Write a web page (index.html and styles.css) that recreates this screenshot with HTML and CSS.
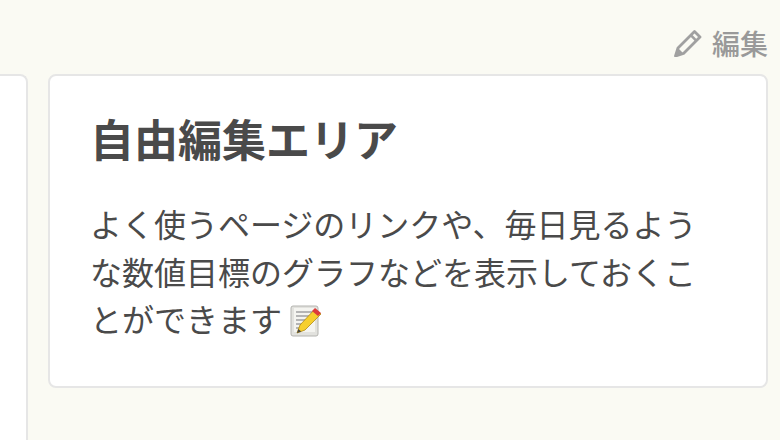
FILE: index.html
```html
<!DOCTYPE html>
<html lang="ja">
<head>
    <meta charset="UTF-8">
    <title>自由編集エリア</title>
    <link rel="stylesheet" href="styles.css">
</head>
<body>
    <div class="toolbar">
        <a class="edit-link" href="#">
            <svg class="edit-icon" viewBox="0 0 28 28" aria-hidden="true">
                <path d="M20.5 2.5 26 8 9.5 24.5 1.5 27l2.5-8z" fill="none" stroke="#a0a0a0" stroke-width="2.8" stroke-linejoin="round"/>
                <path d="M16.8 6.2l5.4 5.4" stroke="#a0a0a0" stroke-width="2.6"/>
                <path d="M1.5 27l2.5-8 5.5 5.5z" fill="#a0a0a0"/>
            </svg>
            編集
        </a>
    </div>
    <div class="columns">
        <div class="panel-left"></div>
        <div class="card">
            <h2>自由編集エリア</h2>
            <p>
                よく使うページのリンクや、毎日見るような数値目標のグラフなどを表示しておくことができます
                <svg class="memo" viewBox="0 0 32 32" role="img" aria-label="memo">
                    <rect x="1" y="1" width="27" height="30" rx="2" fill="#e2e2de" stroke="#b4b4b0"/>
                    <rect x="4" y="3" width="21" height="24" fill="#f4f4f0"/>
                    <path d="M6 7h17M6 11h17M6 15h11M6 19h8M6 23h5" stroke="#77777a" stroke-width="1.2"/>
                    <path d="M25 4l6 5-16 16-8 3 3-8z" fill="#f6cf2e" stroke="#b08a18" stroke-width=".8"/>
                    <path d="M25 3l6 5-3 3-6-5z" fill="#dd3b3b"/>
                    <path d="M7 28l1.4-4 2.8 2.4z" fill="#444"/>
                </svg>
            </p>
        </div>
    </div>
</body>
</html>
```

FILE: styles.css
```css
html, body {
    height: 100%;
}
body {
    margin: 0;
    overflow: hidden;
    display: flex;
    flex-direction: column;
    background-color: #fafaf3;
    color: #4a4a4a;
    font-family: "Liberation Sans", "Noto Sans CJK JP", sans-serif;
}
.toolbar {
    height: 74px;
    flex: none;
    display: flex;
    justify-content: flex-end;
    padding-right: 12px;
    box-sizing: border-box;
}
.edit-link {
    display: flex;
    align-items: center;
    gap: 10px;
    height: 28px;
    margin-top: 29px;
    color: #999;
    font-size: 28px;
    font-weight: 500;
    text-decoration: none;
}
.edit-icon {
    width: 28px;
    height: 28px;
}
.columns {
    flex: 1;
    min-height: 0;
    display: flex;
    gap: 20px;
    padding-right: 12px;
}
.panel-left {
    width: 28px;
    box-sizing: border-box;
    background-color: #fff;
    border: 2px solid #e6e6e6;
    border-left: 0;
    border-bottom: 0;
    border-radius: 0 8px 0 0;
}
.card {
    flex: 1;
    height: 314px;
    box-sizing: border-box;
    padding: 36px 40px 0;
    background-color: #fff;
    border: 2px solid #e6e6e6;
    border-radius: 8px;
}
h2 {
    margin: 0 0 31px;
    font-size: 44px;
    line-height: 60px;
    font-weight: 700;
}
p {
    margin: 0;
    font-size: 32px;
    line-height: 47.5px;
}
.memo {
    width: 32px;
    height: 32px;
    margin-left: -1px;
    vertical-align: -5px;
}
```
